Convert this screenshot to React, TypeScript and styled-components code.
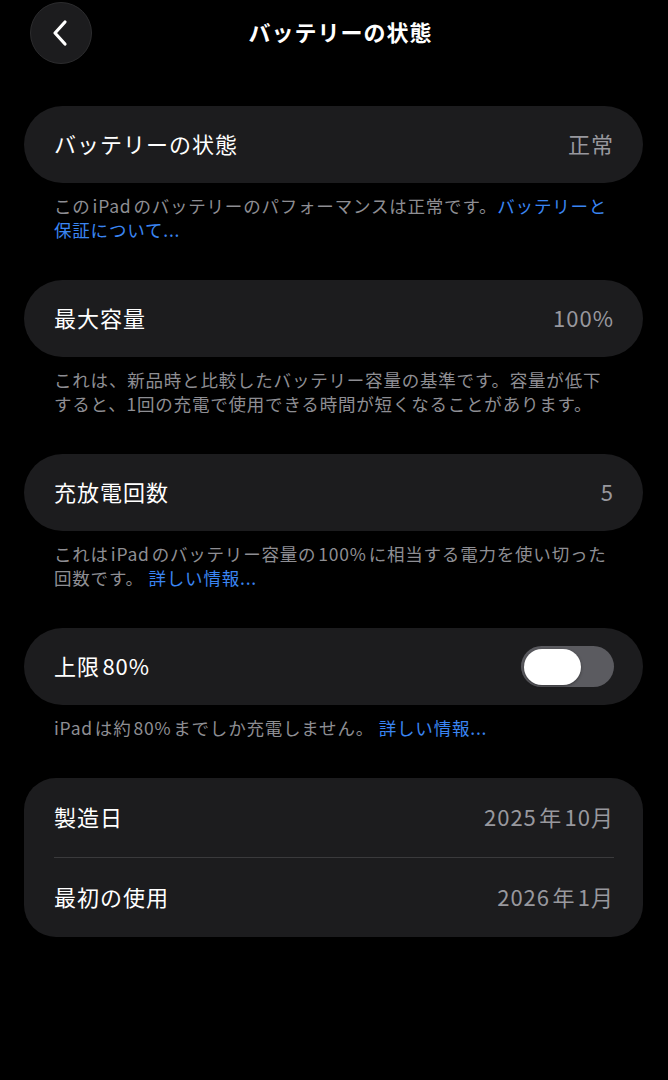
import React from "react";
import styled, { createGlobalStyle } from "styled-components";

const colors = {
  bg: "#000000",
  card: "#1c1c1e",
  label: "#ffffff",
  value: "#98989e",
  note: "#8e8e93",
  link: "#3a85f2",
  divider: "#3a3a3c",
  track: "#5b5b60",
};

// iOS puts a little air between latin and kana
const sp = "\u200A";

const GlobalStyle = createGlobalStyle`
  html, body {
    margin: 0;
    padding: 0;
    background: ${colors.bg};
  }
  body {
    font-family: "Noto Sans CJK JP", "Noto Sans", sans-serif;
    -webkit-font-smoothing: antialiased;
  }
`;

const Page = styled.div`
  width: 668px;
  min-height: 1080px;
  background: ${colors.bg};
  padding: 2px 25px 0 24px;
  box-sizing: border-box;
`;

const Header = styled.div`
  display: grid;
  grid-template-columns: 70px 1fr 70px;
  align-items: center;
  height: 62px;
  margin-bottom: 42px;
`;

const BackButton = styled.div`
  width: 62px;
  height: 62px;
  margin-left: 6px;
  border-radius: 50%;
  background: #1c1c1e;
  border: 1px solid #2c2c2e;
  box-sizing: border-box;
  display: flex;
  align-items: center;
  justify-content: center;
`;

const Title = styled.div`
  text-align: center;
  color: ${colors.label};
  font-size: 22px;
  font-weight: 700;
  letter-spacing: 1px;
  line-height: 1;
  margin-top: -4px;
  padding-left: 14px;
`;

const Card = styled.div<{ $radius?: number }>`
  background: ${colors.card};
  border-radius: ${(p) => p.$radius ?? 39}px;
  padding: 0 29px 0 30px;
`;

const Row = styled.div<{ $height?: number }>`
  display: flex;
  align-items: center;
  justify-content: space-between;
  height: ${(p) => p.$height ?? 77}px;
  padding-bottom: 3px;
  box-sizing: border-box;
`;

const Divider = styled.div`
  height: 1px;
  background: ${colors.divider};
`;

const Label = styled.span`
  color: ${colors.label};
  font-size: 22px;
  letter-spacing: 1px;
  line-height: 1;
`;

const Value = styled.span`
  color: ${colors.value};
  font-size: 22px;
  letter-spacing: 1px;
  line-height: 1;
`;

const Note = styled.div`
  color: ${colors.note};
  font-size: 17.5px;
  line-height: 24px;
  letter-spacing: 0.8px;
  padding: 11px 30px 0 30px;
  margin-bottom: 38px;
  white-space: nowrap;
`;

const Link = styled.span`
  color: ${colors.link};
`;

const Toggle = styled.div`
  width: 93px;
  height: 41px;
  border-radius: 21px;
  background: ${colors.track};
  display: flex;
  align-items: center;
  padding: 0 3px;
  box-sizing: border-box;
  margin-top: 3px;
`;

const Knob = styled.div`
  width: 57px;
  height: 36px;
  border-radius: 18px;
  background: #ffffff;
  box-shadow: 0 1px 3px rgba(0, 0, 0, 0.4);
`;

export default function App() {
  return (
    <>
      <GlobalStyle />
      <Page>
        <Header>
          <BackButton>
            <svg width="20" height="28" viewBox="0 0 20 28">
              <path
                d="M14 3 L4 14 L14 25"
                fill="none"
                stroke="#ffffff"
                strokeWidth="3.2"
                strokeLinecap="round"
                strokeLinejoin="round"
              />
            </svg>
          </BackButton>
          <Title>バッテリーの状態</Title>
          <div />
        </Header>

        <Card>
          <Row>
            <Label>バッテリーの状態</Label>
            <Value>正常</Value>
          </Row>
        </Card>
        <Note>
          この{sp}iPad{sp}のバッテリーのパフォーマンスは正常です。<Link>バッテリーと</Link>
          <br />
          <Link>保証について...</Link>
        </Note>

        <Card>
          <Row>
            <Label>最大容量</Label>
            <Value>100%</Value>
          </Row>
        </Card>
        <Note>
          これは、新品時と比較したバッテリー容量の基準です。容量が低下
          <br />
          すると、1回の充電で使用できる時間が短くなることがあります。
        </Note>

        <Card>
          <Row>
            <Label>充放電回数</Label>
            <Value>5</Value>
          </Row>
        </Card>
        <Note>
          これは{sp}iPad{sp}のバッテリー容量の{sp}100%{sp}に相当する電力を使い切った
          <br />
          回数です。 <Link>詳しい情報...</Link>
        </Note>

        <Card>
          <Row>
            <Label>上限{sp}80%</Label>
            <Toggle>
              <Knob />
            </Toggle>
          </Row>
        </Card>
        <Note>
          iPad{sp}は約{sp}80%{sp}までしか充電しません。 <Link>詳しい情報...</Link>
        </Note>

        <Card $radius={32}>
          <Row $height={79}>
            <Label>製造日</Label>
            <Value>
              2025{sp}年{sp}10月
            </Value>
          </Row>
          <Divider />
          <Row $height={79}>
            <Label>最初の使用</Label>
            <Value>
              2026{sp}年{sp}1月
            </Value>
          </Row>
        </Card>
      </Page>
    </>
  );
}
